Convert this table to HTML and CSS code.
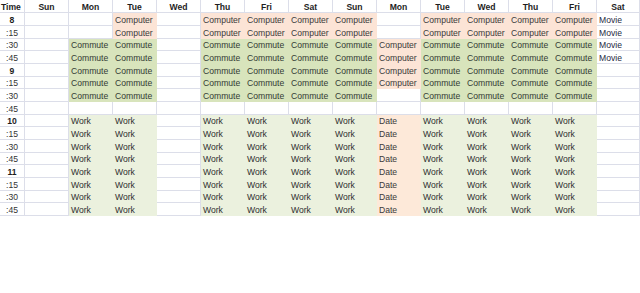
FILE: index.html
```html
<!DOCTYPE html>
<html>
<head>
<meta charset="utf-8">
<link rel="stylesheet" href="styles.css">
</head>
<body>
<div class="sheet">
  <div class="c h t">Time</div><div class="c h">Sun</div><div class="c h">Mon</div><div class="c h">Tue</div><div class="c h">Wed</div><div class="c h">Thu</div><div class="c h">Fri</div><div class="c h">Sat</div><div class="c h">Sun</div><div class="c h">Mon</div><div class="c h">Tue</div><div class="c h">Wed</div><div class="c h">Thu</div><div class="c h">Fri</div><div class="c h">Sat</div>

  <div class="c tm hr">8</div><div class="c"></div><div class="c"></div><div class="c pc">Computer</div><div class="c"></div><div class="c pc">Computer</div><div class="c pc">Computer</div><div class="c pc">Computer</div><div class="c pc">Computer</div><div class="c"></div><div class="c pc">Computer</div><div class="c pc">Computer</div><div class="c pc">Computer</div><div class="c pc">Computer</div><div class="c mv">Movie</div>

  <div class="c tm">:15</div><div class="c"></div><div class="c"></div><div class="c pc">Computer</div><div class="c"></div><div class="c pc">Computer</div><div class="c pc">Computer</div><div class="c pc">Computer</div><div class="c pc">Computer</div><div class="c"></div><div class="c pc">Computer</div><div class="c pc">Computer</div><div class="c pc">Computer</div><div class="c pc">Computer</div><div class="c mv">Movie</div>

  <div class="c tm">:30</div><div class="c"></div><div class="c gc">Commute</div><div class="c gc">Commute</div><div class="c"></div><div class="c gc">Commute</div><div class="c gc">Commute</div><div class="c gc">Commute</div><div class="c gc">Commute</div><div class="c pc">Computer</div><div class="c gc">Commute</div><div class="c gc">Commute</div><div class="c gc">Commute</div><div class="c gc">Commute</div><div class="c mv">Movie</div>

  <div class="c tm">:45</div><div class="c"></div><div class="c gc">Commute</div><div class="c gc">Commute</div><div class="c"></div><div class="c gc">Commute</div><div class="c gc">Commute</div><div class="c gc">Commute</div><div class="c gc">Commute</div><div class="c pc">Computer</div><div class="c gc">Commute</div><div class="c gc">Commute</div><div class="c gc">Commute</div><div class="c gc">Commute</div><div class="c mv">Movie</div>

  <div class="c tm hr">9</div><div class="c"></div><div class="c gc">Commute</div><div class="c gc">Commute</div><div class="c"></div><div class="c gc">Commute</div><div class="c gc">Commute</div><div class="c gc">Commute</div><div class="c gc">Commute</div><div class="c pc">Computer</div><div class="c gc">Commute</div><div class="c gc">Commute</div><div class="c gc">Commute</div><div class="c gc">Commute</div><div class="c"></div>

  <div class="c tm">:15</div><div class="c"></div><div class="c gc">Commute</div><div class="c gc">Commute</div><div class="c"></div><div class="c gc">Commute</div><div class="c gc">Commute</div><div class="c gc">Commute</div><div class="c gc">Commute</div><div class="c pc">Computer</div><div class="c gc">Commute</div><div class="c gc">Commute</div><div class="c gc">Commute</div><div class="c gc">Commute</div><div class="c"></div>

  <div class="c tm">:30</div><div class="c"></div><div class="c gc">Commute</div><div class="c gc">Commute</div><div class="c"></div><div class="c gc">Commute</div><div class="c gc">Commute</div><div class="c gc">Commute</div><div class="c gc">Commute</div><div class="c"></div><div class="c gc">Commute</div><div class="c gc">Commute</div><div class="c gc">Commute</div><div class="c gc">Commute</div><div class="c"></div>

  <div class="c tm">:45</div><div class="c"></div><div class="c"></div><div class="c"></div><div class="c"></div><div class="c"></div><div class="c"></div><div class="c"></div><div class="c"></div><div class="c"></div><div class="c"></div><div class="c"></div><div class="c"></div><div class="c"></div><div class="c"></div>

  <div class="c tm hr">10</div><div class="c"></div><div class="c wk">Work</div><div class="c wk">Work</div><div class="c"></div><div class="c wk">Work</div><div class="c wk">Work</div><div class="c wk">Work</div><div class="c wk">Work</div><div class="c dt">Date</div><div class="c wk">Work</div><div class="c wk">Work</div><div class="c wk">Work</div><div class="c wk">Work</div><div class="c"></div>

  <div class="c tm">:15</div><div class="c"></div><div class="c wk">Work</div><div class="c wk">Work</div><div class="c"></div><div class="c wk">Work</div><div class="c wk">Work</div><div class="c wk">Work</div><div class="c wk">Work</div><div class="c dt">Date</div><div class="c wk">Work</div><div class="c wk">Work</div><div class="c wk">Work</div><div class="c wk">Work</div><div class="c"></div>

  <div class="c tm">:30</div><div class="c"></div><div class="c wk">Work</div><div class="c wk">Work</div><div class="c"></div><div class="c wk">Work</div><div class="c wk">Work</div><div class="c wk">Work</div><div class="c wk">Work</div><div class="c dt">Date</div><div class="c wk">Work</div><div class="c wk">Work</div><div class="c wk">Work</div><div class="c wk">Work</div><div class="c"></div>

  <div class="c tm">:45</div><div class="c"></div><div class="c wk">Work</div><div class="c wk">Work</div><div class="c"></div><div class="c wk">Work</div><div class="c wk">Work</div><div class="c wk">Work</div><div class="c wk">Work</div><div class="c dt">Date</div><div class="c wk">Work</div><div class="c wk">Work</div><div class="c wk">Work</div><div class="c wk">Work</div><div class="c"></div>

  <div class="c tm hr">11</div><div class="c"></div><div class="c wk">Work</div><div class="c wk">Work</div><div class="c"></div><div class="c wk">Work</div><div class="c wk">Work</div><div class="c wk">Work</div><div class="c wk">Work</div><div class="c dt">Date</div><div class="c wk">Work</div><div class="c wk">Work</div><div class="c wk">Work</div><div class="c wk">Work</div><div class="c"></div>

  <div class="c tm">:15</div><div class="c"></div><div class="c wk">Work</div><div class="c wk">Work</div><div class="c"></div><div class="c wk">Work</div><div class="c wk">Work</div><div class="c wk">Work</div><div class="c wk">Work</div><div class="c dt">Date</div><div class="c wk">Work</div><div class="c wk">Work</div><div class="c wk">Work</div><div class="c wk">Work</div><div class="c"></div>

  <div class="c tm">:30</div><div class="c"></div><div class="c wk">Work</div><div class="c wk">Work</div><div class="c"></div><div class="c wk">Work</div><div class="c wk">Work</div><div class="c wk">Work</div><div class="c wk">Work</div><div class="c dt">Date</div><div class="c wk">Work</div><div class="c wk">Work</div><div class="c wk">Work</div><div class="c wk">Work</div><div class="c"></div>

  <div class="c tm">:45</div><div class="c"></div><div class="c wk">Work</div><div class="c wk">Work</div><div class="c"></div><div class="c wk">Work</div><div class="c wk">Work</div><div class="c wk">Work</div><div class="c wk">Work</div><div class="c dt">Date</div><div class="c wk">Work</div><div class="c wk">Work</div><div class="c wk">Work</div><div class="c wk">Work</div><div class="c"></div>
</div>
</body>
</html>
```
FILE: styles.css
```css
html, body {
  margin: 0;
  padding: 0;
  background: #ffffff;
}

.sheet {
  display: grid;
  grid-template-columns: 25px repeat(13, 44px) 43px;
  grid-template-rows: 13.33px;
  grid-auto-rows: 12.67px;
  width: 640px;
  font-family: "Liberation Sans", Arial, sans-serif;
  font-size: 8.6px;
  color: #333333;
}

.c {
  box-sizing: border-box;
  display: flex;
  align-items: flex-end;
  padding: 0 0 0 2px;
  line-height: 10px;
  white-space: nowrap;
  overflow: hidden;
  border-right: 1px solid #dcdee9;
  border-bottom: 1px solid #dcdee9;
  background: #ffffff;
}

.h {
  justify-content: center;
  padding: 0;
  font-weight: bold;
  color: #1e1e1e;
}

.h.t {
  justify-content: flex-start;
  padding-left: 1px;
}

.tm {
  justify-content: center;
  padding: 0;
  color: #333333;
}

.hr {
  font-weight: bold;
  color: #1e1e1e;
}

.pc {
  background: #fce4d6;
  border-color: #fce4d6;
  color: #3a3a3a;
}

.gc {
  background: #d8e4bc;
  border-color: #d8e4bc;
  color: #333a33;
}

.wk {
  background: #ebf1de;
  border-color: #ebf1de;
  color: #2e2e2e;
}

.dt {
  background: #fde9d9;
  border-color: #fde9d9;
  color: #3a3a3a;
}

.mv {
  color: #1f2a44;
}
```
